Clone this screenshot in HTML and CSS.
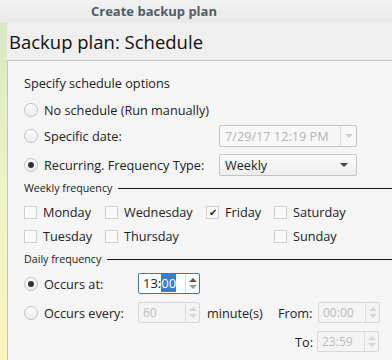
FILE: index.html
```html
<!DOCTYPE html>
<html lang="en">

<head>
    <meta charset="utf-8">
    <meta name="viewport" content="width=device-width, initial-scale=1.0">
    <title>Create backup plan</title>
    <link rel="stylesheet" href="styles.css">
</head>

<body>

    <header class="titlebar">Create backup plan</header>

    <div class="window">
        <div class="strip"></div>

        <main class="page">
            <h1>Backup plan: Schedule</h1>

            <section class="panel">
                <p class="intro">Specify schedule options</p>

                <div class="row r1">
                    <span class="radio"></span>
                    <span>No schedule (Run manually)</span>
                </div>
                <div class="row r2">
                    <span class="radio"></span>
                    <span class="label wide">Specific date:</span>
                    <div class="combo disabled">
                        <span class="value">7/29/17 12:19 PM</span>
                        <span class="drop"><i class="arrow"></i></span>
                    </div>
                </div>
                <div class="row r3">
                    <span class="radio checked"></span>
                    <span class="label wide">Recurring. Frequency Type:</span>
                    <div class="combo plain">
                        <span class="value">Weekly</span>
                        <span class="drop"><i class="arrow"></i></span>
                    </div>
                </div>

                <div class="group g1">Weekly frequency</div>
                <div class="days">
                    <label class="day"><span class="check"></span>Monday</label>
                    <label class="day"><span class="check"></span>Wednesday</label>
                    <label class="day"><span class="check on">✔</span>Friday</label>
                    <label class="day"><span class="check"></span>Saturday</label>
                    <label class="day"><span class="check"></span>Tuesday</label>
                    <label class="day"><span class="check"></span>Thursday</label>
                    <span></span>
                    <label class="day"><span class="check"></span>Sunday</label>
                </div>

                <div class="group g2">Daily frequency</div>
                <div class="row d1">
                    <span class="radio checked"></span>
                    <span class="label short">Occurs at:</span>
                    <div class="spin focus">
                        <span class="value">13:<b class="sel">00</b></span>
                        <span class="btns"><i class="up"></i><i class="down"></i></span>
                    </div>
                </div>
                <div class="row d2">
                    <span class="radio"></span>
                    <span class="label short">Occurs every:</span>
                    <div class="spin disabled">
                        <span class="value">60</span>
                        <span class="btns"><i class="up"></i><i class="down"></i></span>
                    </div>
                    <span class="unit">minute(s)</span>
                    <span class="tlabel">From:</span>
                    <div class="spin disabled">
                        <span class="value">00:00</span>
                        <span class="btns"><i class="up"></i><i class="down"></i></span>
                    </div>
                </div>
                <div class="row d3">
                    <span class="tlabel to">To:</span>
                    <div class="spin disabled">
                        <span class="value">23:59</span>
                        <span class="btns"><i class="up"></i><i class="down"></i></span>
                    </div>
                </div>
            </section>
        </main>
    </div>

</body>

</html>
```

FILE: styles.css
```css
* {
    box-sizing: border-box;
}

body {
    margin: 0;
    height: 360px;
    overflow: hidden;
    background: #efefef;
    font-family: "Open Sans", "Liberation Sans", sans-serif;
    font-size: 12.7px;
    color: #222;
}

.titlebar {
    height: 23px;
    padding-left: 91px;
    line-height: 23px;
    font-size: 13px;
    font-weight: bold;
    color: #4e5d68;
    background: linear-gradient(#f2f2f2, #e9e9e9);
}

.window {
    display: flex;
    height: 337px;
}

.strip {
    flex-shrink: 0;
    width: 7px;
    background: linear-gradient(#d9e8c4, #eef3c8 50%, #fbf6bd);
}

.page {
    flex: 1;
    min-width: 0;
    display: flex;
    flex-direction: column;
}

h1 {
    margin: 0;
    height: 37px;
    padding: 6px 0 0 2px;
    font-size: 18.5px;
    font-weight: normal;
    color: #111;
}

.panel {
    flex: 1;
    border-top: 1px solid #c4c4c4;
    border-left: 1px solid #c4c4c4;
    background: #f5f5f5;
    padding: 14px 0 0 16px;
}

.intro {
    margin: 0;
    height: 16px;
    line-height: 16px;
}

.row {
    display: flex;
    align-items: center;
    height: 22px;
}

.r1 { margin-top: 8px; }
.r2 { margin-top: 4px; }
.r3 { margin-top: 7px; }

.radio {
    flex-shrink: 0;
    width: 14px;
    height: 14px;
    margin-right: 6px;
    border: 1px solid #c2c2c2;
    border-radius: 50%;
    background: linear-gradient(#fdfdfd, #ececec);
    display: flex;
    align-items: center;
    justify-content: center;
}

.radio.checked::after {
    content: "";
    width: 6px;
    height: 6px;
    border-radius: 50%;
    background: #333;
}

.label.wide { width: 175px; }
.label.short { width: 94px; }

.combo {
    flex-shrink: 0;
    width: 138px;
    height: 22px;
    border: 1px solid #c4c4c4;
    border-radius: 2px;
    display: flex;
    align-items: center;
    background: linear-gradient(#fbfbfb, #eeeeee);
}

.combo .value {
    flex: 1;
    padding-left: 5px;
}

.combo .drop {
    width: 16px;
    height: 100%;
    display: flex;
    align-items: center;
    justify-content: center;
}

.combo.plain .drop {
    width: 24px;
}

.combo.disabled {
    background: #f7f7f7;
    color: #b5b5b5;
}

.combo.disabled .drop {
    border-left: 1px solid #dadada;
}

.arrow {
    width: 0;
    height: 0;
    border-left: 4px solid transparent;
    border-right: 4px solid transparent;
    border-top: 4px solid #444;
}

.disabled .arrow {
    border-top-color: #cdcdcd;
}

.group {
    display: flex;
    align-items: center;
    height: 14px;
    font-size: 10.7px;
    color: #222;
}

.group::after {
    content: "";
    flex: 1;
    margin-left: 6px;
    border-top: 1px solid #1a1a1a;
}

.g1 { margin-top: 5px; }
.g2 { margin-top: 6px; }

.days {
    display: grid;
    grid-template-columns: 81px 101px 68px auto;
    grid-auto-rows: 20px;
    row-gap: 4px;
    margin-top: 7px;
}

.day {
    display: flex;
    align-items: center;
}

.check {
    width: 13px;
    height: 13px;
    margin-right: 6px;
    border: 1px solid #d0d0d0;
    background: #fafafa;
    font-size: 10px;
    line-height: 11px;
    text-align: center;
    color: #222;
}

.d1 { margin-top: 7px; height: 21px; }
.d2 { margin-top: 8px; height: 21px; }
.d3 { margin-top: 8px; height: 21px; }

.spin {
    flex-shrink: 0;
    width: 62px;
    height: 21px;
    border: 1px solid #c8c8c8;
    border-radius: 2px;
    display: flex;
    background: #fff;
}

.spin .value {
    flex: 1;
    padding-left: 4px;
    line-height: 19px;
    font-size: 13px;
}

.spin .btns {
    width: 14px;
    border-left: 1px solid #dcdcdc;
    display: flex;
    flex-direction: column;
    align-items: center;
    justify-content: center;
    gap: 3px;
}

.up, .down {
    width: 0;
    height: 0;
    border-left: 4px solid transparent;
    border-right: 4px solid transparent;
}

.up { border-bottom: 4px solid #555; }
.down { border-top: 4px solid #999; }

.spin.focus {
    border-color: #3c78aa;
}

.sel {
    font-weight: normal;
    background: #3b7dc8;
    color: #fff;
}

.spin.disabled {
    background: #f4f4f4;
    border-color: #d8d8d8;
    color: #bcbcbc;
}

.spin.disabled .value {
    font-size: 12px;
}

.spin.disabled .up { border-bottom-color: #d6d6d6; }
.spin.disabled .down { border-top-color: #d6d6d6; }

.unit {
    margin-left: 7px;
    width: 71px;
}

.tlabel {
    width: 40px;
}

.tlabel.to {
    margin-left: 253px;
    text-align: right;
    padding-right: 4px;
}
```
